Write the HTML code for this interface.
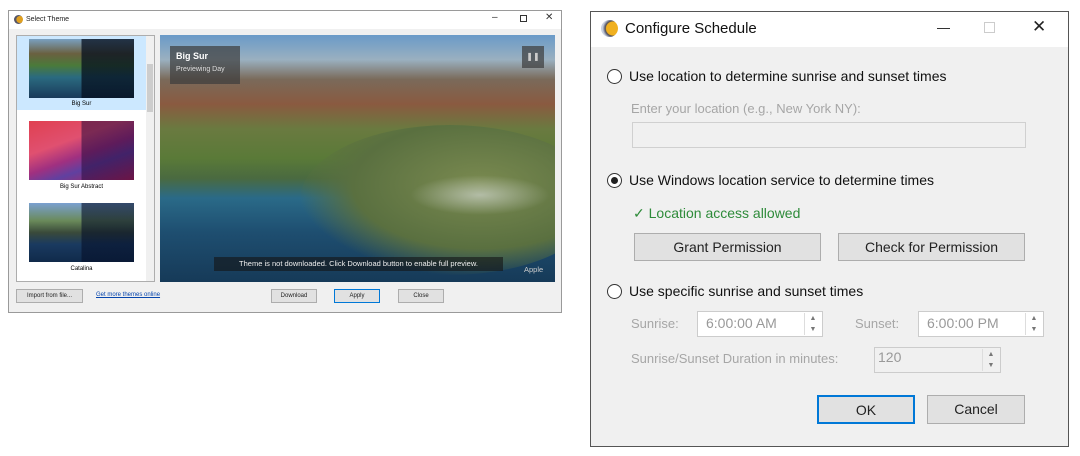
<!DOCTYPE html>
<html><head><style>
*{margin:0;padding:0;box-sizing:border-box}
body{width:1080px;height:456px;background:#fff;position:relative;overflow:hidden;font-family:"Liberation Sans",sans-serif}
.a{position:absolute}
.btn{position:absolute;background:#e1e1e1;border:1px solid #adadad;text-align:center;color:#222}
.r{position:absolute;width:15px;height:15px;border:1px solid #333;border-radius:50%;background:#fff}
.t{position:absolute;font-size:14px;color:#111;white-space:nowrap}
.g{color:#a6a6a6}
.in{position:absolute;background:#fff;border:1px solid #ccc;font-size:14px;color:#888;padding:3px 0 0 8px}
.sp{position:absolute;right:1px;top:1px;bottom:1px;width:17px;border-left:1px solid #ddd;font-size:7px;color:#777;text-align:center;line-height:11px}
</style></head><body>
<!-- Left dialog -->
<div class="a" style="left:8px;top:10px;width:554px;height:303px;border:1px solid #9a9a9a;background:#f0f0f0">
 <div class="a" style="left:0;top:0;width:552px;height:18px;background:#fff"></div>
 <div class="a" style="left:5px;top:4px;width:9px;height:9px;border-radius:50%;background:radial-gradient(circle at 65% 50%,#e0a020 45%,#556 50%)"></div>
 <div class="a" style="left:17px;top:5px;font-size:7px;color:#222">Select Theme</div>
 <div class="a" style="left:483px;top:1px;font-size:10px;color:#333">–</div>
 <div class="a" style="left:511px;top:4px;width:7px;height:7px;border:1px solid #333"></div>
 <div class="a" style="left:536px;top:1px;font-size:10px;color:#333">✕</div>
 <!-- list -->
 <div class="a" style="left:7px;top:24px;width:139px;height:247px;background:#fff;border:1px solid #adadad">
  <div class="a" style="left:0;top:0;width:129px;height:74px;background:#cce8ff"></div>
  <div class="a" style="left:12px;top:3px;width:105px;height:59px;background:linear-gradient(90deg,transparent 50%,rgba(5,15,30,.75) 50%),linear-gradient(180deg,#7aa0c0 0%,#6a6040 25%,#4a7a3a 45%,#2a6a80 65%,#1a3a5a 100%)"></div>
  <div class="a" style="left:0;top:65px;width:129px;text-align:center;font-size:6px">Big Sur</div>
  <div class="a" style="left:12px;top:85px;width:105px;height:59px;background:linear-gradient(90deg,transparent 50%,rgba(40,10,60,.55) 50%),linear-gradient(160deg,#e04050 0%,#e05070 35%,#a03080 55%,#6040a0 70%,#c02050 100%)"></div>
  <div class="a" style="left:0;top:148px;width:129px;text-align:center;font-size:6px">Big Sur Abstract</div>
  <div class="a" style="left:12px;top:167px;width:105px;height:59px;background:linear-gradient(90deg,transparent 50%,rgba(5,15,40,.6) 50%),linear-gradient(180deg,#7aa0d0 0%,#6a8a5a 30%,#3a4a3a 50%,#1a3a60 70%,#102a4a 100%)"></div>
  <div class="a" style="left:0;top:230px;width:129px;text-align:center;font-size:6px">Catalina</div>
  <div class="a" style="left:129px;top:0;width:8px;height:245px;background:#f0f0f0"></div>
  <div class="a" style="left:130px;top:28px;width:6px;height:48px;background:#cdcdcd"></div>
 </div>
 <!-- preview -->
 <div class="a" style="left:151px;top:24px;width:395px;height:247px;overflow:hidden;background:linear-gradient(180deg,#6a9ac8 0%,#9ab0c0 10%,#7a6a5a 18%,#8a5a40 28%,#6a7a40 38%,#5a7a38 50%,#4a6a40 58%,#2a6a88 66%,#1e4e70 80%,#163a58 100%)">
  <div class="a" style="left:140px;top:90px;width:300px;height:150px;border-radius:50%;background:radial-gradient(ellipse at 60% 40%,#7a8a50 0%,#5a7040 50%,rgba(70,90,50,0) 72%)"></div>
  <div class="a" style="left:250px;top:140px;width:140px;height:40px;border-radius:50%;background:radial-gradient(ellipse,rgba(220,225,225,.6),rgba(220,225,225,0) 70%)"></div>
  <div class="a" style="left:10px;top:11px;width:70px;height:38px;background:rgba(60,60,60,.7)"></div>
  <div class="a" style="left:16px;top:16px;font-size:9px;font-weight:bold;color:#fff">Big Sur</div>
  <div class="a" style="left:16px;top:31px;font-size:7px;color:#ddd">Previewing Day</div>
  <div class="a" style="left:362px;top:11px;width:22px;height:22px;background:rgba(60,60,60,.7);color:#ccc;font-size:8px;text-align:center;line-height:22px">❚❚</div>
  <div class="a" style="left:54px;top:222px;width:289px;height:14px;background:rgba(20,20,20,.6);color:#eee;font-size:7.5px;text-align:center;line-height:14px">Theme is not downloaded. Click Download button to enable full preview.</div>
  <div class="a" style="left:364px;top:230px;color:#ccc;font-size:7.5px">Apple</div>
 </div>
 <div class="btn" style="left:7px;top:278px;width:67px;height:14px;font-size:6px;line-height:12px">Import from file...</div>
 <div class="a" style="left:87px;top:281px;font-size:6px;color:#0645ad;text-decoration:underline">Get more themes online</div>
 <div class="btn" style="left:262px;top:278px;width:46px;height:14px;font-size:6px;line-height:12px">Download</div>
 <div class="btn" style="left:325px;top:278px;width:46px;height:14px;font-size:6px;line-height:12px;border-color:#0078d7">Apply</div>
 <div class="btn" style="left:389px;top:278px;width:46px;height:14px;font-size:6px;line-height:12px">Close</div>
</div>
<!-- Right dialog -->
<div class="a" style="left:590px;top:11px;width:479px;height:436px;border:1px solid #555;background:#f0f0f0">
 <div class="a" style="left:0;top:0;width:477px;height:35px;background:#fff"></div>
 <div class="a" style="left:10px;top:8px;width:17px;height:17px;border-radius:50%;background:radial-gradient(circle at 70% 50%,#f0b020 45%,#4a4a5a 52%,#c8d0e0 70%)"></div>
 <div class="a" style="left:34px;top:8px;font-size:15px;color:#111">Configure Schedule</div>
 <div class="a" style="left:346px;top:16px;width:13px;height:1px;background:#333"></div>
 <div class="a" style="left:393px;top:10px;width:11px;height:11px;border:1px solid #ccc"></div>
 <div class="a" style="left:441px;top:5px;font-size:17px;color:#222">✕</div>
 <div class="r" style="left:16px;top:57px"></div>
 <div class="t" style="left:38px;top:56px">Use location to determine sunrise and sunset times</div>
 <div class="t g" style="left:40px;top:89px;font-size:13px">Enter your location (e.g., New York NY):</div>
 <div class="in" style="left:41px;top:110px;width:394px;height:26px;border-color:#d0d0d0;background:#f0f0f0"></div>
 <div class="r" style="left:16px;top:161px"><div class="a" style="left:3px;top:3px;width:7px;height:7px;border-radius:50%;background:#222"></div></div>
 <div class="t" style="left:38px;top:160px">Use Windows location service to determine times</div>
 <div class="t" style="left:42px;top:193px;color:#2e8b3a">✓ Location access allowed</div>
 <div class="btn" style="left:43px;top:221px;width:187px;height:28px;font-size:14px;line-height:26px">Grant Permission</div>
 <div class="btn" style="left:247px;top:221px;width:187px;height:28px;font-size:14px;line-height:26px">Check for Permission</div>
 <div class="r" style="left:16px;top:272px"></div>
 <div class="t" style="left:38px;top:271px">Use specific sunrise and sunset times</div>
 <div class="t g" style="left:40px;top:304px;font-size:13px">Sunrise:</div>
 <div class="in" style="left:106px;top:299px;width:126px;height:26px;color:#999">6:00:00 AM<div class="sp">▲<br>▼</div></div>
 <div class="t g" style="left:264px;top:304px;font-size:13px">Sunset:</div>
 <div class="in" style="left:327px;top:299px;width:126px;height:26px;color:#999">6:00:00 PM<div class="sp">▲<br>▼</div></div>
 <div class="t g" style="left:40px;top:339px;font-size:13px">Sunrise/Sunset Duration in minutes:</div>
 <div class="in" style="left:283px;top:335px;width:127px;height:26px;background:#f0f0f0;color:#999;padding-left:3px;padding-top:1px">120<div class="sp" style="background:#f0f0f0">▲<br>▼</div></div>
 <div class="btn" style="left:226px;top:383px;width:98px;height:29px;font-size:14px;line-height:27px;border:2px solid #0078d7">OK</div>
 <div class="btn" style="left:336px;top:383px;width:98px;height:29px;font-size:14px;line-height:27px">Cancel</div>
</div>
</body></html>
